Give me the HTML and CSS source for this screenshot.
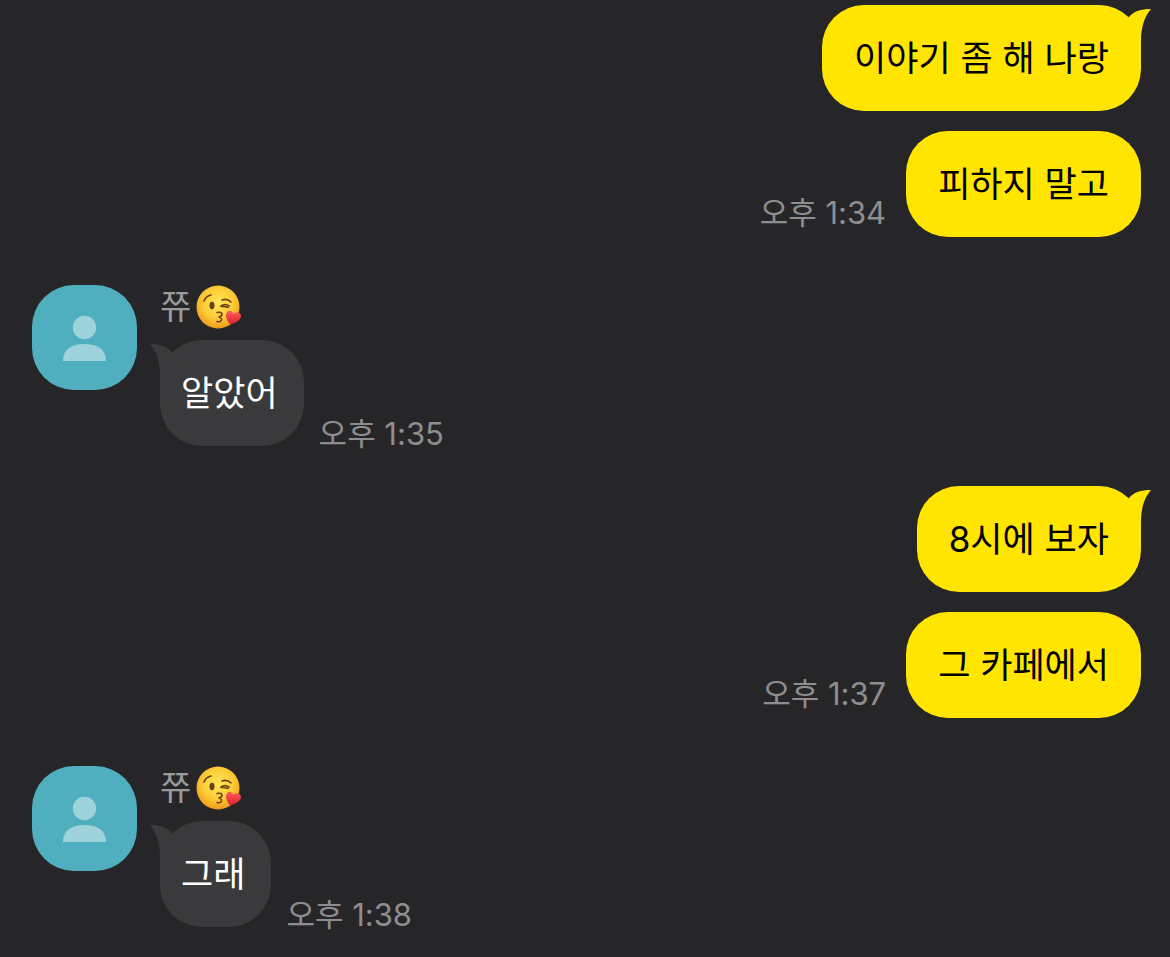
FILE: index.html
```html
<!DOCTYPE html>
<html lang="ko">
<head>
  <meta charset="UTF-8">
  <meta name="viewport" content="width=device-width, initial-scale=1.0">
  <title>채팅</title>
  <link rel="stylesheet" href="styles.css">
</head>
<body>

  <!-- Shared drawings -->
  <svg class="sprites" aria-hidden="true">
    <defs>
      <radialGradient id="face" cx="50%" cy="40%" r="60%">
        <stop offset="0" stop-color="#ffe75a"/>
        <stop offset="0.6" stop-color="#fdcb35"/>
        <stop offset="1" stop-color="#ee9a1c"/>
      </radialGradient>
      <linearGradient id="heart" x1="0" y1="0" x2="0" y2="1">
        <stop offset="0" stop-color="#ff5a5c"/>
        <stop offset="1" stop-color="#d91f2d"/>
      </linearGradient>
    </defs>
    <symbol id="tail" viewBox="0 0 31 48">
      <path d="M9 12C14 6 21 4 31 4C25 11 21 21 21 36L21 44L0 44Z"/>
    </symbol>
    <symbol id="person" viewBox="0 0 105 105">
      <circle cx="52.5" cy="42.5" r="11.7"/>
      <path d="M31 76C31 64 40 59 52.5 59S74 64 74 76Z"/>
    </symbol>
    <symbol id="kiss" viewBox="0 0 46 44">
      <circle cx="22" cy="22" r="21.5" fill="url(#face)"/>
      <g fill="none" stroke="#6b4010" stroke-linecap="round" stroke-width="1.6">
        <path d="M8 16Q10 11 15 10"/>
        <path d="M26 15Q31 13 35 17"/>
        <path d="M25 21Q29 18 33 21M25 21.5Q29 21 32 22.5"/>
        <path d="M21 27.5Q26 26.500 26 29.500Q25.500 31.500 22.500 32Q26 32.500 25.500 35Q24.500 37.500 21 36.500"/>
      </g>
      <ellipse cx="16" cy="20.5" rx="2.5" ry="3.7" fill="#6b4010"/>
      <path d="M34 39.500C31 35 29 31 30.500 28C32.500 24.500 36 25.500 37.500 29C40 26 44 27 45 30.500C45.500 35 40 37.500 34 39.500Z" fill="url(#heart)"/>
    </symbol>
  </svg>

  <main class="chat">
    <section class="sent">
      <p class="bubble">이야기 좀 해 나랑<svg class="tail"><use href="#tail"/></svg></p>
      <div class="line">
        <time class="time">오후 1:34</time>
        <p class="bubble">피하지 말고</p>
      </div>
    </section>

    <section class="received">
      <svg class="avatar" role="img" aria-label="쮸"><use href="#person"/></svg>
      <div class="content">
        <h2 class="name">쮸<svg class="emoji"><use href="#kiss"/></svg></h2>
        <div class="line">
          <p class="bubble">알았어<svg class="tail"><use href="#tail"/></svg></p>
          <time class="time">오후 1:35</time>
        </div>
      </div>
    </section>

    <section class="sent">
      <p class="bubble">8시에 보자<svg class="tail"><use href="#tail"/></svg></p>
      <div class="line">
        <time class="time">오후 1:37</time>
        <p class="bubble">그 카페에서</p>
      </div>
    </section>

    <section class="received">
      <svg class="avatar" role="img" aria-label="쮸"><use href="#person"/></svg>
      <div class="content">
        <h2 class="name">쮸<svg class="emoji"><use href="#kiss"/></svg></h2>
        <div class="line">
          <p class="bubble">그래<svg class="tail"><use href="#tail"/></svg></p>
          <time class="time">오후 1:38</time>
        </div>
      </div>
    </section>
  </main>

</body>
</html>
```
FILE: styles.css
```css
body {
  margin: 0;
  background-color: #262628;
  font-family: Inter, "Noto Sans CJK KR", sans-serif;
}

p, h2 {
  margin: 0;
}

.sprites {
  position: absolute;
  width: 0;
  height: 0;
}

.chat {
  display: flex;
  flex-direction: column;
  padding: 5px 29px 28px 32px;
}

.sent {
  display: flex;
  flex-direction: column;
  align-items: flex-end;
  gap: 20px;
  margin-bottom: 48px;
}

.received {
  display: flex;
  align-items: flex-start;
  gap: 23px;
  margin-bottom: 40px;
}

.received:last-child {
  margin-bottom: 0;
}

.line {
  display: flex;
  align-items: flex-end;
}

.bubble {
  position: relative;
  padding: 28px 32px;
  border-radius: 42px;
  font-size: 35px;
  line-height: 50px;
}

.sent .bubble {
  background-color: #ffe500;
  color: #000;
}

.received .bubble {
  padding-left: 21px;
  padding-right: 26px;
  background-color: #3a3a3c;
  color: #fff;
}

.tail {
  position: absolute;
  top: 0;
  right: -10px;
  width: 31px;
  height: 48px;
  fill: #ffe500;
}

.received .tail {
  right: auto;
  left: -10px;
  fill: #3a3a3c;
  transform: scaleX(-1);
}

.time {
  color: #8e8e90;
  font-size: 31px;
  line-height: 40px;
}

.sent .time {
  margin: 0 20px 4px 0;
}

.received .time {
  margin: 0 0 -8px 15px;
}

.avatar {
  width: 105px;
  height: 105px;
  border-radius: 42px;
  background-color: #50afbf;
  fill: #9fd3db;
}

.name {
  display: flex;
  align-items: center;
  gap: 5px;
  height: 44px;
  margin-bottom: 11px;
  color: #9a9a9c;
  font-size: 34px;
  font-weight: 400;
  line-height: 44px;
}

.emoji {
  width: 46px;
  height: 44px;
}
```
